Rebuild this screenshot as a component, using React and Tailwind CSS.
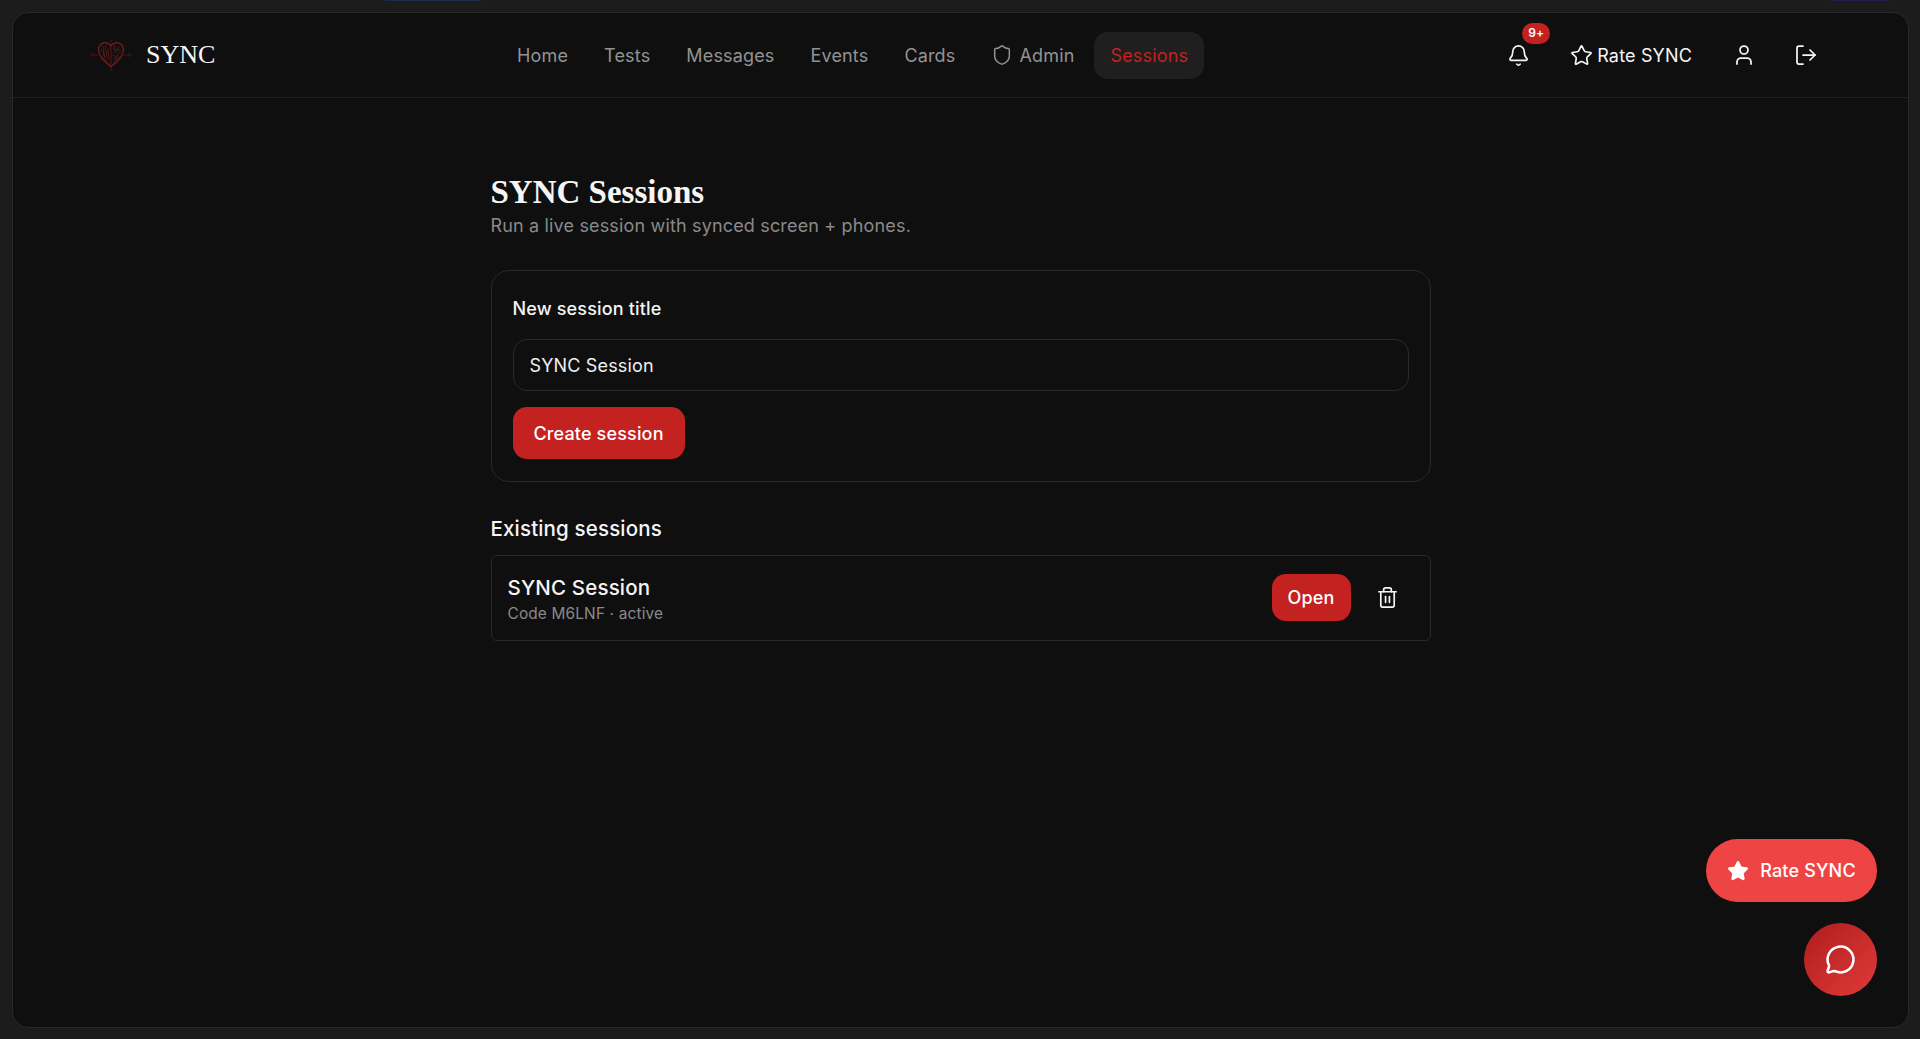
import React from "react";
import { Shield, Bell, Star, User, LogOut, Trash2, MessageCircle } from "lucide-react";

const inter = "font-['Inter',sans-serif]";

function Heart() {
  return (
    <svg width="42" height="34" viewBox="0 0 44 34" fill="none" className="shrink-0">
      <g stroke="#7a1c1c" strokeWidth="0.7">
        <path d="M22 29 C16 24 9 19 9 11.5 C9 7 12.5 4 16 4 C18.5 4 20.5 5.2 22 7.5 C23.5 5.2 25.5 4 28 4 C31.5 4 35 7 35 11.5 C35 19 28 24 22 29 Z" strokeWidth="1.3" />
        <path d="M22 8 V29 M13 7 C15 12 13 18 18 24 M17 6 C14 11 19 14 17 19 M20 9 C17 13 21 17 19 22 M11 12 C14 13 15 15 15 19" />
        <path d="M31 8 C27 10 30 13 26 15 M26 6 C24 10 28 11 25 14 M33 13 C28 15 29 19 25 21 M23 17 C26 17 27 19 28 22 M24 10 C26 12 29 12 32 11 M24 24 C26 22 29 21 31 18" />
        <path d="M0 17 H9 M35 17 H44 M3 14.5 V19.5 M41 14.5 V19.5 M22 0 V4 M22 29 V34" strokeWidth="0.7" opacity="0.7" />
      </g>
    </svg>
  );
}

function NavLink({ children, active }) {
  return (
    <a className={`flex h-[47px] items-center gap-[6px] rounded-[14px] px-4 text-[18px] ${active ? "bg-[#1f1f1f] text-[#c42121]" : "text-[#939393]"}`}>
      {children}
    </a>
  );
}

export default function App() {
  return (
    <div className={`relative h-[1039px] overflow-hidden bg-[#1c1c1c] pl-3 pr-[11px] pt-3 tracking-[0.01em] ${inter}`}>
      <div className="absolute left-[385px] top-0 h-px w-[96px] bg-[#1e2a4a]" />
      <div className="absolute left-[1830px] top-0 h-px w-[60px] bg-[#221c48]" />
      <div className="flex h-[1016px] flex-col rounded-[16px] border border-[#2a2a2a] bg-[#0f0f0f]">
        <header className="flex h-[85px] shrink-0 items-center border-b border-[#222222] pl-[77px] pr-[90px]">
          <div className="flex w-[200px] items-center gap-[14px]">
            <Heart />
            <span className="font-['Liberation_Serif',serif] text-[26px] leading-none tracking-normal text-[#f5f5f5]">SYNC</span>
          </div>
          <nav className="ml-[211px] flex items-center gap-1">
            <NavLink>Home</NavLink>
            <NavLink>Tests</NavLink>
            <NavLink>Messages</NavLink>
            <NavLink>Events</NavLink>
            <NavLink>Cards</NavLink>
            <NavLink>
              <Shield size={22} strokeWidth={1.6} />
              Admin
            </NavLink>
            <NavLink active>Sessions</NavLink>
          </nav>
          <div className="ml-auto flex items-center text-[#f5f5f5]">
            <div className="relative mr-[40px] flex items-center">
              <Bell size={23} strokeWidth={1.75} />
              <span className="absolute left-[15px] top-[-21px] flex h-[21px] w-[28px] items-center justify-center rounded-full bg-[#c42121] text-[12px] font-semibold text-white">9+</span>
            </div>
            <div className="mr-[40px] flex items-center gap-[4px] text-[18px]">
              <Star size={23} strokeWidth={1.75} />
              Rate SYNC
            </div>
            <User size={24} strokeWidth={1.75} className="mr-[38px]" />
            <LogOut size={24} strokeWidth={1.75} />
          </div>
        </header>

        <main className="mx-auto w-[940px] pt-[76px]">
          <h1 className="font-['Liberation_Serif',serif] text-[33px] font-bold leading-[36px] tracking-normal text-[#f5f5f5]">SYNC Sessions</h1>
          <p className="mt-[2px] text-[18px] leading-[28px] text-[#8a8a8a]">Run a live session with synced screen + phones.</p>

          <section className="mt-[30px] flex h-[212px] flex-col rounded-[18px] border border-[#2a2a2a] px-[21px] pt-[24px]">
            <label className="text-[18px] font-[450] leading-[28px] text-[#f5f5f5]">New session title</label>
            <div className="mt-[16px] flex h-[52px] items-center rounded-[14px] border border-[#2a2a2a] px-4 text-[18px] text-[#f0f0f0]">SYNC Session</div>
            <button className="mt-[16px] h-[52px] w-[172px] rounded-[14px] bg-[#c42121] text-[18px] font-[450] text-white">Create session</button>
          </section>

          <h2 className="mt-[33px] text-[20.5px] font-[450] leading-[28px] text-[#f5f5f5]">Existing sessions</h2>

          <section className="mt-[12px] flex h-[86px] items-center justify-between rounded-[6px] border border-[#2a2a2a] pl-[16px] pr-[31px]">
            <div className="pt-[2px]">
              <div className="text-[20.5px] font-[450] leading-[28px] text-[#f5f5f5]">SYNC Session</div>
              <div className="mt-px text-[15.4px] leading-[22px] text-[#8a8a8a]">Code M6LNF · active</div>
            </div>
            <div className="mb-[2px] flex items-center gap-[25px]">
              <button className="h-[47px] w-[79px] rounded-[14px] bg-[#c42121] text-[18px] font-[450] text-white">Open</button>
              <Trash2 size={23} strokeWidth={1.75} className="text-[#f5f5f5]" />
            </div>
          </section>
        </main>
      </div>

      <button className="absolute left-[1706px] top-[839px] flex h-[63px] w-[171px] items-center justify-center gap-[11px] rounded-full bg-[#ef4444] text-[18px] font-[450] text-white">
        <Star size={22} fill="currentColor" strokeWidth={1.75} />
        Rate SYNC
      </button>
      <button className="absolute left-[1804px] top-[923px] flex h-[73px] w-[73px] items-center justify-center rounded-full bg-gradient-to-br from-[#b01c1c] to-[#e03a3a] text-white">
        <MessageCircle size={31} strokeWidth={2} />
      </button>
    </div>
  );
}
